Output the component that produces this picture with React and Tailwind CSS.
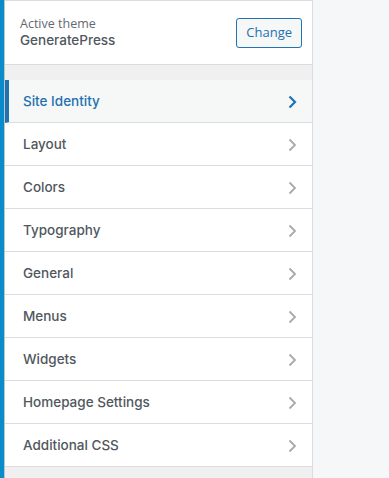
import React from "react";

const sections = [
  "Site Identity",
  "Layout",
  "Colors",
  "Typography",
  "General",
  "Menus",
  "Widgets",
  "Homepage Settings",
  "Additional CSS",
];

const Chevron = ({ active }) => (
  <svg width="10" height="14" viewBox="0 0 10 14" className="shrink-0">
    <path
      d="M2.5 1.5 L8 7 L2.5 12.5"
      fill="none"
      stroke={active ? "#2271b1" : "#a7aaad"}
      strokeWidth={active ? "2.2" : "1.8"}
    />
  </svg>
);

export default function App() {
  return (
    <div
      className="flex h-[478px] w-[389px] bg-[#f6f7f8] overflow-hidden"
      style={{ fontFamily: '"Open Sans", "Noto Sans", sans-serif' }}
    >
      <div className="w-[5px] bg-[#0a8ccb] border-r border-[#c3c4c7]" />
      <div className="w-[308px] flex flex-col bg-[#f0f0f1] border-r border-[#dcdcde]">
        <div className="h-[65px] bg-white border-t border-b border-[#dcdcde] flex items-center justify-between pl-[15px] pr-[10px]">
          <div className="leading-tight">
            <div className="text-[12.5px] text-[#646970]">Active theme</div>
            <div
              className="text-[13.5px] font-medium text-[#50575e]"
              style={{ fontFamily: "Inter, sans-serif" }}
            >
              GeneratePress
            </div>
          </div>
          <button className="h-[30px] px-[9px] rounded-[3px] border border-[#2271b1] bg-[#f6f7f7] text-[13px] text-[#2271b1]">
            Change
          </button>
        </div>
        <div className="h-[15px]" />
        <ul className="bg-white">
          {sections.map((s, i) => {
            const active = i === 0;
            return (
              <li
                key={s}
                className={`h-[43px] flex items-center justify-between pr-[15px] pt-[1px] border-b border-[#dcdcde] ${
                  active
                    ? "bg-[#f6f7f7] border-l-[4px] border-l-[#2271b1] pl-[14px] text-[#2271b1]"
                    : "pl-[18px] text-[#50575e]"
                }`}
              >
                <span className="text-[13.5px] font-medium" style={{ fontFamily: "Inter, sans-serif" }}>
                  {s}
                </span>
                <Chevron active={active} />
              </li>
            );
          })}
        </ul>
      </div>
      <div className="flex-1" />
    </div>
  );
}
